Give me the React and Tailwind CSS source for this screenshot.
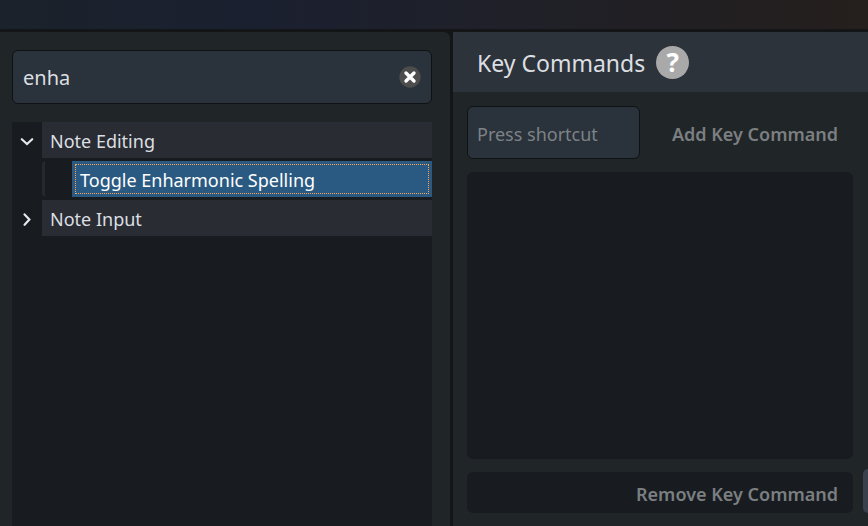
const groups = [
  { name: 'Note Editing', open: true, commands: ['Toggle Enharmonic Spelling'] },
  { name: 'Note Input', open: false, commands: [] },
];

function Chevron({ open }) {
  return (
    <svg
      className="h-4 w-4 text-gray-200"
      viewBox="0 0 16 16"
      fill="none"
      stroke="currentColor"
      strokeWidth="2.2"
      strokeLinecap="round"
    >
      <path d={open ? 'M2.8 7.2L8 12L13.2 7.2' : 'M5.6 4.4L10.4 9.6L5.6 14.8'} />
    </svg>
  );
}

function CommandTree() {
  return (
    <ul className="flex flex-1 flex-col gap-[3px] bg-[#181c20] text-lg">
      {groups.map((group) => (
        <li key={group.name} className="flex flex-col gap-[3px]">
          <button className="flex h-9 w-full items-center text-left" aria-expanded={group.open}>
            <span className="flex w-[30px] justify-center">
              <Chevron open={group.open} />
            </span>
            <span className="flex h-full flex-1 items-center bg-[#292d33] px-2 pt-0.5">{group.name}</span>
          </button>
          {group.open && (
            <ul className="ml-[30px] flex flex-col gap-[3px] rounded-sm border-l-[3px] border-[#25292e]">
              {group.commands.map((command) => (
                <li key={command} className="pl-[27px]">
                  <button className="flex h-9 w-full items-center bg-[#2a5a82] p-[3px] text-left text-white">
                    <span className="flex h-full flex-1 items-center border border-dotted border-[#ffa550] px-1 pt-0.5">
                      {command}
                    </span>
                  </button>
                </li>
              ))}
            </ul>
          )}
        </li>
      ))}
    </ul>
  );
}

function SearchPanel() {
  return (
    <section className="flex flex-col gap-[18px] rounded-tr-md bg-[#202528] pt-[18px] pr-[18px] pl-3">
      <div className="flex h-[54px] items-center rounded-md border border-[#0f1214] bg-[#2a323b] px-[10px]">
        <input
          type="text"
          aria-label="Search commands"
          defaultValue="enha"
          className="min-w-0 flex-1 bg-transparent pt-0.5 text-xl outline-none"
        />
        <button aria-label="Clear search">
          <svg className="h-[22px] w-[22px]" viewBox="0 0 22 22">
            <circle cx="11" cy="11" r="10.7" fill="#4d4d4d" />
            <path d="M7 7L15 15M15 7L7 15" stroke="#fff" strokeWidth="3.4" strokeLinecap="round" />
          </svg>
        </button>
      </div>
      <CommandTree />
    </section>
  );
}

function KeyCommandsPanel() {
  return (
    <section className="flex flex-col bg-[#202528] pb-[13px]">
      <header className="flex h-[60px] items-center gap-[11px] bg-[#2d333b] pl-6">
        <h2 className="pt-0.5 text-[23px]">Key Commands</h2>
        <button
          aria-label="Help"
          className="flex h-[33px] w-[33px] items-center justify-center rounded-full bg-[#a9a9a9] text-[26px] leading-none font-bold text-white"
        >
          ?
        </button>
      </header>

      <div className="mt-[14px] mr-[15px] ml-[14px] flex h-[53px]">
        <input
          type="text"
          aria-label="Shortcut"
          placeholder="Press shortcut"
          className="w-[173px] rounded-md border border-[#0f1214] bg-[#2a323b] px-[9px] pt-0.5 text-lg outline-none placeholder:text-[#7d8286]"
        />
        <button className="flex-1 pt-0.5 pr-[15px] text-right text-lg font-semibold whitespace-nowrap text-[#7b7f81]">
          Add Key Command
        </button>
      </div>

      <ul aria-label="Assigned shortcuts" className="mt-[13px] mr-[15px] ml-[14px] flex-1 rounded-md bg-[#181c20]" />

      <div className="mt-[10px] ml-[14px] flex items-end gap-[10px]">
        <button className="h-[41px] flex-1 rounded-md bg-[#181c20] px-[15px] pt-0.5 text-right text-lg font-semibold text-[#7b7f81]">
          Remove Key Command
        </button>
        <button aria-label="More" className="h-11 w-[5px] rounded-l-md bg-[#3a414d]" />
      </div>
    </section>
  );
}

export default function App() {
  return (
    <div className="flex min-h-screen flex-col bg-[#131516] font-['Noto_Sans','Open_Sans',sans-serif] text-[#dcdfe2]">
      <div className="mb-[3px] h-[29px] bg-linear-to-r from-[#1b222b] via-[#1b2030] via-30% to-[#251f1d]" />
      <main className="grid flex-1 grid-cols-[450fr_415fr] gap-[3px]">
        <SearchPanel />
        <KeyCommandsPanel />
      </main>
    </div>
  );
}
